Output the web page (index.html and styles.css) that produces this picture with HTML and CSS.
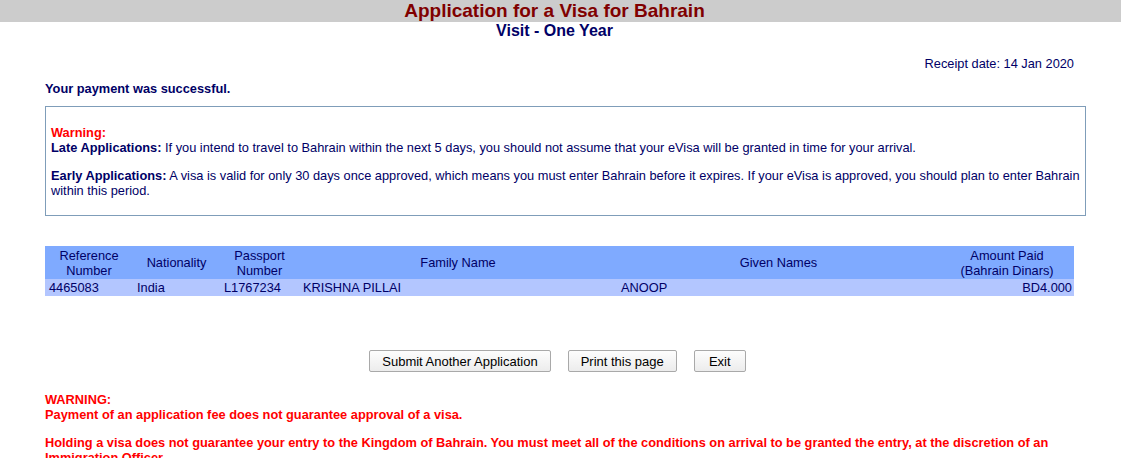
FILE: index.html
```html
<!DOCTYPE html>
<html>
<head>
<meta charset="utf-8">
<title>Application for a Visa for Bahrain</title>
<link rel="stylesheet" href="styles.css">
</head>
<body>
<div class="titlebar">Application for a Visa for Bahrain</div>
<div class="subtitle">Visit - One Year</div>
<div class="content">
  <div class="receipt">Receipt date: 14 Jan 2020</div>
  <div class="success">Your payment was successful.</div>
  <div class="notice">
    <div class="warn">Warning:</div>
    <p class="first"><b>Late Applications:</b> If you intend to travel to Bahrain within the next 5 days, you should not assume that your eVisa will be granted in time for your arrival.</p>
    <p><b>Early Applications:</b> A visa is valid for only 30 days once approved, which means you must enter Bahrain before it expires. If your eVisa is approved, you should plan to enter Bahrain within this period.</p>
  </div>
  <table class="apps">
    <colgroup>
      <col class="c1"><col class="c2"><col class="c3"><col class="c4"><col class="c5"><col class="c6">
    </colgroup>
    <thead>
      <tr>
        <th>Reference<br>Number</th>
        <th>Nationality</th>
        <th>Passport<br>Number</th>
        <th>Family Name</th>
        <th>Given Names</th>
        <th>Amount Paid<br>(Bahrain Dinars)</th>
      </tr>
    </thead>
    <tbody>
      <tr>
        <td>4465083</td>
        <td>India</td>
        <td>L1767234</td>
        <td>KRISHNA PILLAI</td>
        <td>ANOOP</td>
        <td class="amt">BD4.000</td>
      </tr>
    </tbody>
  </table>
  <div class="actions">
    <button class="btn">Submit Another Application</button>
    <button class="btn">Print this page</button>
    <button class="btn btn-exit">Exit</button>
  </div>
  <div class="bottomwarn">
    <div>WARNING:</div>
    <div>Payment of an application fee does not guarantee approval of a visa.</div>
    <div class="gap">Holding a visa does not guarantee your entry to the Kingdom of Bahrain. You must meet all of the conditions on arrival to be granted the entry, at the discretion of an Immigration Officer.</div>
  </div>
</div>
</body>
</html>
```
FILE: styles.css
```css
html, body {
  margin: 0;
  padding: 0;
  background: #fff;
}
body {
  font-family: "Liberation Sans", Arial, sans-serif;
  font-size: 12.8px;
  color: #000066;
  overflow: hidden;
}
.titlebar {
  background: #cccccc;
  color: #800000;
  font-weight: bold;
  font-size: 19px;
  text-align: center;
  height: 22px;
  line-height: 21px;
  padding-right: 12px;
}
.subtitle {
  color: #000066;
  font-weight: bold;
  font-size: 16px;
  text-align: center;
  line-height: 18px;
  padding-right: 12px;
}
.content {
  padding: 0 36px 0 45px;
}
.receipt {
  text-align: right;
  padding-right: 11px;
  margin-top: 16px;
  line-height: 16px;
}
.success {
  font-weight: bold;
  margin-top: 9px;
  line-height: 16px;
}
.notice {
  margin-top: 9px;
  border: 1px solid #7f9db9;
  padding: 18px 5px 17px 5px;
  width: 1029px;
  line-height: 15px;
}
.notice .warn {
  color: #ff0000;
  font-weight: bold;
}
.notice p {
  margin: 13px 0 0 0;
}
.notice p.first {
  margin-top: 0;
}
.apps {
  margin-top: 30px;
  border-collapse: collapse;
  width: 1029px;
  table-layout: fixed;
  font-size: 12.8px;
  color: #000066;
}
.apps .c1 { width: 88px; }
.apps .c2 { width: 87px; }
.apps .c3 { width: 79px; }
.apps .c4 { width: 318px; }
.apps .c5 { width: 323px; }
.apps .c6 { width: 134px; }
.apps th {
  background: #7faaff;
  font-weight: normal;
  text-align: center;
  padding: 0 2px;
  line-height: 15px;
  height: 33px;
}
.apps td {
  background: #b3c6ff;
  padding: 0 4px;
  line-height: 15px;
  height: 17px;
  white-space: nowrap;
}
.apps td.amt {
  text-align: right;
  padding-right: 2px;
}
.actions {
  margin-top: 54px;
  display: flex;
  justify-content: center;
  gap: 17px;
  padding-right: 15px;
}
.btn {
  font-family: "Liberation Sans", Arial, sans-serif;
  font-size: 13px;
  color: #000;
  height: 22px;
  padding: 0 12px;
  border: 1px solid #a9a9a9;
  border-radius: 2px;
  background: linear-gradient(#fdfdfd, #ececec);
}
.btn-exit {
  min-width: 52px;
}
.bottomwarn {
  margin-top: 20px;
  color: #ff0000;
  font-weight: bold;
  line-height: 15px;
}
.bottomwarn .gap {
  margin-top: 13px;
  padding-right: 10px;
}
```
